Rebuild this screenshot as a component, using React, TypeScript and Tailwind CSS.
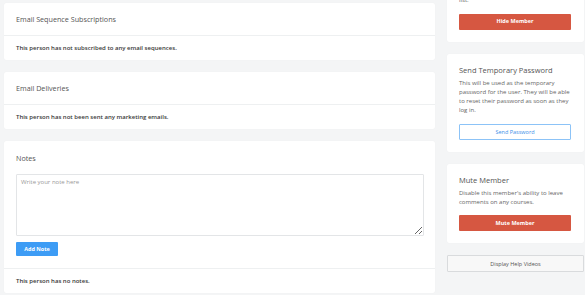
import React from 'react';

const font = { fontFamily: '"Open Sans", "Liberation Sans", sans-serif' };

function Card({ children, className = '' }: { children: React.ReactNode; className?: string }) {
  return <div className={`bg-white rounded-[2px] shadow-[0_0_1px_rgba(0,0,0,0.06)] ${className}`}>{children}</div>;
}

function SideCard({ title, text, children }: { title: string; text: React.ReactNode; children: React.ReactNode }) {
  return (
    <Card className="px-[12px] pt-[11px] pb-[12px]">
      <div className="text-[7.5px] leading-[10px] text-[#555]">{title}</div>
      <p className="mt-[4px] text-[6px] leading-[9.3px] text-[#666]">{text}</p>
      <div className="mt-[8px] flex">{children}</div>
    </Card>
  );
}

export default function App() {
  return (
    <div className="w-[585px] h-[295px] overflow-hidden bg-[#f4f5f6] flex gap-[12px] pl-[4px]" style={font}>
      {/* main column */}
      <div className="w-[431px] flex flex-col gap-[12px] pt-[3px]">
        <Card>
          <div className="h-[33px] flex items-center px-[12px] pt-[1px] text-[7.2px] text-[#555] border-b border-[#eef0f1]">
            Email Sequence Subscriptions
          </div>
          <div className="h-[24px] flex items-center px-[12px] text-[6px] font-semibold text-[#383838]">
            This person has not subscribed to any email sequences.
          </div>
        </Card>

        <Card>
          <div className="h-[33px] flex items-center px-[12px] pt-[1px] text-[7.2px] text-[#555] border-b border-[#eef0f1]">
            Email Deliveries
          </div>
          <div className="h-[24px] flex items-center px-[12px] text-[6px] font-semibold text-[#383838]">
            This person has not been sent any marketing emails.
          </div>
        </Card>

        <Card>
          <div className="px-[12px] pt-[12px] pb-[12px] border-b border-[#eef0f1]">
            <div className="text-[7.2px] leading-[10px] text-[#555]">Notes</div>
            <textarea
              placeholder="Write your note here"
              className="mt-[11px] block w-[408px] h-[62px] border border-[#e3e5e7] rounded-[1px] px-[4px] py-[3px] text-[6px] text-[#555] placeholder:text-[#999] outline-none"
              style={font}
            />
            <button className="mt-[6px] block h-[14px] w-[42px] bg-[#3d9cf5] text-white text-[5.5px] font-bold rounded-[1px]">
              Add Note
            </button>
          </div>
          <div className="h-[24px] flex items-center px-[12px] text-[6px] font-semibold text-[#383838]">
            This person has no notes.
          </div>
        </Card>
      </div>

      {/* side column */}
      <div className="w-[137px] flex flex-col gap-[12px] -mt-[38px]">
        <SideCard
          title="Hide Member"
          text={
            <>
              Hide this member from your member
              <br />
              list.
            </>
          }
        >
          <button className="block w-[112px] h-[16px] bg-[#d65741] text-white text-[5.5px] font-bold rounded-[1px]">
            Hide Member
          </button>
        </SideCard>

        <SideCard
          title="Send Temporary Password"
          text="This will be used as the temporary password for the user. They will be able to reset their password as soon as they log in."
        >
          <button className="block w-[112px] h-[16px] bg-white border border-[#8cc3f7] text-[#3d8fe8] text-[5.5px] rounded-[1px]">
            Send Password
          </button>
        </SideCard>

        <SideCard title="Mute Member" text="Disable this member's ability to leave comments on any courses.">
          <button className="block w-[112px] h-[16px] bg-[#d65741] text-white text-[5.5px] font-bold rounded-[1px]">
            Mute Member
          </button>
        </SideCard>

        <button className="block w-[137px] h-[17px] bg-[#f8f8f8] border border-[#d9dbdd] text-[#555] text-[5.5px] rounded-[1px]">
          Display Help Videos
        </button>
      </div>
    </div>
  );
}
